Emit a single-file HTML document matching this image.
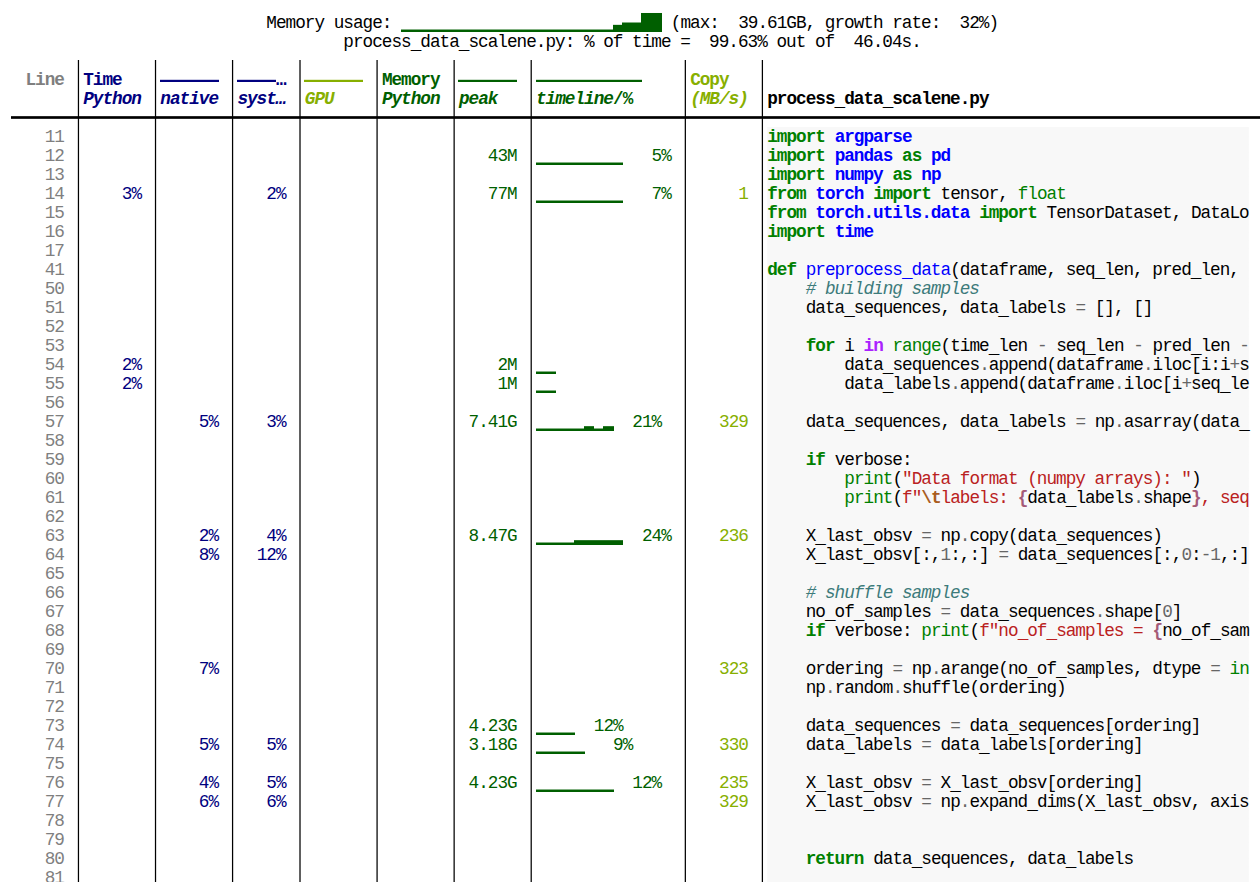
<!DOCTYPE html><html><head><meta charset="utf-8"><style>
html,body{margin:0;padding:0;background:#fff;width:1260px;height:882px;overflow:hidden;position:relative}
.t{position:absolute;white-space:pre;font-family:"Liberation Mono",monospace;font-size:17.7px;line-height:19px;letter-spacing:-0.99px}
.r{position:absolute}
.b{font-weight:bold}.i{font-style:italic}.u{position:relative;top:2.0px}
</style></head><body>
<div class="r" style="left:767px;top:127px;width:482px;height:755px;background:linear-gradient(to right,rgba(248,248,248,0.79) 0,rgba(248,248,248,0.79) 1px,#f8f8f8 1px,#f8f8f8 calc(100% - 1px),rgba(248,248,248,0.86) calc(100% - 1px),rgba(248,248,248,0.86) 100%)"></div>
<div class="r" style="left:401px;top:29px;width:213px;height:3px;background:linear-gradient(to bottom,rgba(0,95,0,0.49) 0,rgba(0,95,0,0.49) 1px,#005f00 1px,#005f00 calc(100% - 1px),rgba(0,95,0,1.00) calc(100% - 1px),rgba(0,95,0,1.00) 100%)"></div>
<div class="r" style="left:613px;top:24px;width:10px;height:8px;background:linear-gradient(to bottom,rgba(0,95,0,0.16) 0,rgba(0,95,0,0.16) 1px,#005f00 1px,#005f00 calc(100% - 1px),rgba(0,95,0,1.00) calc(100% - 1px),rgba(0,95,0,1.00) 100%)"></div>
<div class="r" style="left:622px;top:22px;width:20px;height:10px;background:linear-gradient(to bottom,rgba(0,95,0,0.50) 0,rgba(0,95,0,0.50) 1px,#005f00 1px,#005f00 calc(100% - 1px),rgba(0,95,0,1.00) calc(100% - 1px),rgba(0,95,0,1.00) 100%)"></div>
<div class="r" style="left:641px;top:12px;width:21px;height:20px;background:linear-gradient(to bottom,rgba(0,95,0,0.01) 0,rgba(0,95,0,0.01) 1px,#005f00 1px,#005f00 calc(100% - 1px),rgba(0,95,0,1.00) calc(100% - 1px),rgba(0,95,0,1.00) 100%)"></div>
<div class="r" style="left:160px;top:79px;width:59px;height:3px;background:linear-gradient(to bottom,rgba(0,0,128,0.20) 0,rgba(0,0,128,0.20) 1px,#000080 1px,#000080 calc(100% - 1px),rgba(0,0,128,1.00) calc(100% - 1px),rgba(0,0,128,1.00) 100%)"></div>
<div class="r" style="left:237px;top:79px;width:39px;height:3px;background:linear-gradient(to bottom,rgba(0,0,128,0.20) 0,rgba(0,0,128,0.20) 1px,#000080 1px,#000080 calc(100% - 1px),rgba(0,0,128,1.00) calc(100% - 1px),rgba(0,0,128,1.00) 100%)"></div>
<div class="r" style="left:304px;top:79px;width:59px;height:3px;background:linear-gradient(to bottom,rgba(135,175,0,0.20) 0,rgba(135,175,0,0.20) 1px,#87af00 1px,#87af00 calc(100% - 1px),rgba(135,175,0,1.00) calc(100% - 1px),rgba(135,175,0,1.00) 100%)"></div>
<div class="r" style="left:458px;top:79px;width:59px;height:3px;background:linear-gradient(to bottom,rgba(0,95,0,0.20) 0,rgba(0,95,0,0.20) 1px,#005f00 1px,#005f00 calc(100% - 1px),rgba(0,95,0,1.00) calc(100% - 1px),rgba(0,95,0,1.00) 100%)"></div>
<div class="r" style="left:536px;top:79px;width:106px;height:3px;background:linear-gradient(to bottom,rgba(0,95,0,0.20) 0,rgba(0,95,0,0.20) 1px,#005f00 1px,#005f00 calc(100% - 1px),rgba(0,95,0,1.00) calc(100% - 1px),rgba(0,95,0,1.00) 100%)"></div>
<div class="r" style="left:77px;top:60px;width:3px;height:822px;background:linear-gradient(to right,rgba(0,0,0,0.17) 0,rgba(0,0,0,0.17) 1px,#000 1px,#000 calc(100% - 1px),rgba(0,0,0,0.08) calc(100% - 1px),rgba(0,0,0,0.08) 100%)"></div>
<div class="r" style="left:154px;top:60px;width:3px;height:822px;background:linear-gradient(to right,rgba(0,0,0,0.11) 0,rgba(0,0,0,0.11) 1px,#000 1px,#000 calc(100% - 1px),rgba(0,0,0,0.14) calc(100% - 1px),rgba(0,0,0,0.14) 100%)"></div>
<div class="r" style="left:231px;top:60px;width:3px;height:822px;background:linear-gradient(to right,rgba(0,0,0,0.05) 0,rgba(0,0,0,0.05) 1px,#000 1px,#000 calc(100% - 1px),rgba(0,0,0,0.20) calc(100% - 1px),rgba(0,0,0,0.20) 100%)"></div>
<div class="r" style="left:299px;top:60px;width:2px;height:822px;background:linear-gradient(to right,rgba(0,0,0,0.62) 0,rgba(0,0,0,0.62) 1px,#000 1px,#000 calc(100% - 1px),rgba(0,0,0,0.63) calc(100% - 1px),rgba(0,0,0,0.63) 100%)"></div>
<div class="r" style="left:376px;top:60px;width:2px;height:822px;background:linear-gradient(to right,rgba(0,0,0,0.55) 0,rgba(0,0,0,0.55) 1px,#000 1px,#000 calc(100% - 1px),rgba(0,0,0,0.70) calc(100% - 1px),rgba(0,0,0,0.70) 100%)"></div>
<div class="r" style="left:453px;top:60px;width:2px;height:822px;background:linear-gradient(to right,rgba(0,0,0,0.49) 0,rgba(0,0,0,0.49) 1px,#000 1px,#000 calc(100% - 1px),rgba(0,0,0,0.76) calc(100% - 1px),rgba(0,0,0,0.76) 100%)"></div>
<div class="r" style="left:530px;top:60px;width:2px;height:822px;background:linear-gradient(to right,rgba(0,0,0,0.42) 0,rgba(0,0,0,0.42) 1px,#000 1px,#000 calc(100% - 1px),rgba(0,0,0,0.83) calc(100% - 1px),rgba(0,0,0,0.83) 100%)"></div>
<div class="r" style="left:684px;top:60px;width:2px;height:822px;background:linear-gradient(to right,rgba(0,0,0,0.29) 0,rgba(0,0,0,0.29) 1px,#000 1px,#000 calc(100% - 1px),rgba(0,0,0,0.96) calc(100% - 1px),rgba(0,0,0,0.96) 100%)"></div>
<div class="r" style="left:761px;top:60px;width:3px;height:822px;background:linear-gradient(to right,rgba(0,0,0,0.23) 0,rgba(0,0,0,0.23) 1px,#000 1px,#000 calc(100% - 1px),rgba(0,0,0,0.02) calc(100% - 1px),rgba(0,0,0,0.02) 100%)"></div>
<div class="r" style="left:11px;top:116px;width:1249px;height:3px;background:linear-gradient(to bottom,rgba(0,0,0,0.84) 0,rgba(0,0,0,0.84) 1px,#000 1px,#000 calc(100% - 1px),rgba(0,0,0,0.84) calc(100% - 1px),rgba(0,0,0,0.84) 100%)"></div>
<div class="r" style="left:536px;top:162px;width:87px;height:3px;background:linear-gradient(to bottom,rgba(0,95,0,0.49) 0,rgba(0,95,0,0.49) 1px,#005f00 1px,#005f00 calc(100% - 1px),rgba(0,95,0,1.00) calc(100% - 1px),rgba(0,95,0,1.00) 100%)"></div>
<div class="r" style="left:536px;top:200px;width:87px;height:3px;background:linear-gradient(to bottom,rgba(0,95,0,0.49) 0,rgba(0,95,0,0.49) 1px,#005f00 1px,#005f00 calc(100% - 1px),rgba(0,95,0,1.00) calc(100% - 1px),rgba(0,95,0,1.00) 100%)"></div>
<div class="r" style="left:536px;top:371px;width:20px;height:3px;background:linear-gradient(to bottom,rgba(0,95,0,0.49) 0,rgba(0,95,0,0.49) 1px,#005f00 1px,#005f00 calc(100% - 1px),rgba(0,95,0,1.00) calc(100% - 1px),rgba(0,95,0,1.00) 100%)"></div>
<div class="r" style="left:536px;top:390px;width:20px;height:3px;background:linear-gradient(to bottom,rgba(0,95,0,0.49) 0,rgba(0,95,0,0.49) 1px,#005f00 1px,#005f00 calc(100% - 1px),rgba(0,95,0,1.00) calc(100% - 1px),rgba(0,95,0,1.00) 100%)"></div>
<div class="r" style="left:536px;top:428px;width:49px;height:3px;background:linear-gradient(to bottom,rgba(0,95,0,0.49) 0,rgba(0,95,0,0.49) 1px,#005f00 1px,#005f00 calc(100% - 1px),rgba(0,95,0,1.00) calc(100% - 1px),rgba(0,95,0,1.00) 100%)"></div>
<div class="r" style="left:584px;top:426px;width:10px;height:5px;background:linear-gradient(to bottom,rgba(0,95,0,0.83) 0,rgba(0,95,0,0.83) 1px,#005f00 1px,#005f00 calc(100% - 1px),rgba(0,95,0,1.00) calc(100% - 1px),rgba(0,95,0,1.00) 100%)"></div>
<div class="r" style="left:593px;top:428px;width:11px;height:3px;background:linear-gradient(to bottom,rgba(0,95,0,0.49) 0,rgba(0,95,0,0.49) 1px,#005f00 1px,#005f00 calc(100% - 1px),rgba(0,95,0,1.00) calc(100% - 1px),rgba(0,95,0,1.00) 100%)"></div>
<div class="r" style="left:603px;top:426px;width:11px;height:5px;background:linear-gradient(to bottom,rgba(0,95,0,0.83) 0,rgba(0,95,0,0.83) 1px,#005f00 1px,#005f00 calc(100% - 1px),rgba(0,95,0,1.00) calc(100% - 1px),rgba(0,95,0,1.00) 100%)"></div>
<div class="r" style="left:536px;top:542px;width:39px;height:3px;background:linear-gradient(to bottom,rgba(0,95,0,0.49) 0,rgba(0,95,0,0.49) 1px,#005f00 1px,#005f00 calc(100% - 1px),rgba(0,95,0,1.00) calc(100% - 1px),rgba(0,95,0,1.00) 100%)"></div>
<div class="r" style="left:574px;top:540px;width:49px;height:5px;background:linear-gradient(to bottom,rgba(0,95,0,0.83) 0,rgba(0,95,0,0.83) 1px,#005f00 1px,#005f00 calc(100% - 1px),rgba(0,95,0,1.00) calc(100% - 1px),rgba(0,95,0,1.00) 100%)"></div>
<div class="r" style="left:536px;top:732px;width:39px;height:3px;background:linear-gradient(to bottom,rgba(0,95,0,0.49) 0,rgba(0,95,0,0.49) 1px,#005f00 1px,#005f00 calc(100% - 1px),rgba(0,95,0,1.00) calc(100% - 1px),rgba(0,95,0,1.00) 100%)"></div>
<div class="r" style="left:536px;top:751px;width:49px;height:3px;background:linear-gradient(to bottom,rgba(0,95,0,0.49) 0,rgba(0,95,0,0.49) 1px,#005f00 1px,#005f00 calc(100% - 1px),rgba(0,95,0,1.00) calc(100% - 1px),rgba(0,95,0,1.00) 100%)"></div>
<div class="r" style="left:536px;top:789px;width:78px;height:3px;background:linear-gradient(to bottom,rgba(0,95,0,0.49) 0,rgba(0,95,0,0.49) 1px,#005f00 1px,#005f00 calc(100% - 1px),rgba(0,95,0,1.00) calc(100% - 1px),rgba(0,95,0,1.00) 100%)"></div>
<div class="t" style="left:266.29px;top:14px;color:#000">Memory usage: </div>
<div class="t" style="left:661.24px;top:14px;color:#000"> (max:  39.61GB, growth rate:  32%)</div>
<div class="t" style="left:343.35px;top:33px;color:#000">process<span class="u">_</span>data<span class="u">_</span>scalene.py: % of time =  99.63% out of  46.04s.</div>
<div class="t b" style="left:25.47px;top:71px;color:#7f7f7f">Line</div>
<div class="t b" style="left:83.26px;top:71px;color:#000080">Time</div>
<div class="t b" style="left:275.92px;top:71px;color:#000080">…</div>
<div class="t b" style="left:381.89px;top:71px;color:#005f00">Memory</div>
<div class="t b" style="left:690.14px;top:71px;color:#87af00">Copy</div>
<div class="t b i" style="left:83.26px;top:90px;color:#000080">Python</div>
<div class="t b i" style="left:160.33px;top:90px;color:#000080">native</div>
<div class="t b i" style="left:237.39px;top:90px;color:#000080">syst…</div>
<div class="t b i" style="left:304.82px;top:90px;color:#87af00">GPU</div>
<div class="t b i" style="left:381.89px;top:90px;color:#005f00">Python</div>
<div class="t b i" style="left:458.95px;top:90px;color:#005f00">peak</div>
<div class="t b i" style="left:536.01px;top:90px;color:#005f00">timeline</div>
<div class="t b" style="left:613.08px;top:90px;color:#005f00">/%</div>
<div class="t b i" style="left:690.14px;top:90px;color:#87af00">(MB/s)</div>
<div class="t b" style="left:767.21px;top:90px;color:#000">process<span class="u">_</span>data<span class="u">_</span>scalene.py</div>
<div class="t" style="left:44.73px;top:128px;color:#7f7f7f">11</div>
<div class="t b" style="left:767.21px;top:128px;color:#008000">import</div>
<div class="t b" style="left:834.64px;top:128px;color:#0000ff">argparse</div>
<div class="t" style="left:44.73px;top:147px;color:#7f7f7f">12</div>
<div class="t" style="left:487.85px;top:147px;color:#005f00">43M</div>
<div class="t" style="left:622.71px;top:147px;color:#005f00">   5%</div>
<div class="t b" style="left:767.21px;top:147px;color:#008000">import</div>
<div class="t b" style="left:834.64px;top:147px;color:#0000ff">pandas</div>
<div class="t b" style="left:902.07px;top:147px;color:#008000">as</div>
<div class="t b" style="left:930.97px;top:147px;color:#0000ff">pd</div>
<div class="t" style="left:44.73px;top:166px;color:#7f7f7f">13</div>
<div class="t b" style="left:767.21px;top:166px;color:#008000">import</div>
<div class="t b" style="left:834.64px;top:166px;color:#0000ff">numpy</div>
<div class="t b" style="left:892.44px;top:166px;color:#008000">as</div>
<div class="t b" style="left:921.33px;top:166px;color:#0000ff">np</div>
<div class="t" style="left:44.73px;top:185px;color:#7f7f7f">14</div>
<div class="t" style="left:121.8px;top:185px;color:#000080">3%</div>
<div class="t" style="left:266.29px;top:185px;color:#000080">2%</div>
<div class="t" style="left:487.85px;top:185px;color:#005f00">77M</div>
<div class="t" style="left:738.31px;top:185px;color:#87af00">1</div>
<div class="t" style="left:622.71px;top:185px;color:#005f00">   7%</div>
<div class="t b" style="left:767.21px;top:185px;color:#008000">from</div>
<div class="t b" style="left:815.37px;top:185px;color:#0000ff">torch</div>
<div class="t b" style="left:873.17px;top:185px;color:#008000">import</div>
<div class="t" style="left:940.6px;top:185px;color:#000000">tensor, </div>
<div class="t" style="left:1017.66px;top:185px;color:#008000">float</div>
<div class="t" style="left:44.73px;top:204px;color:#7f7f7f">15</div>
<div class="t b" style="left:767.21px;top:204px;color:#008000">from</div>
<div class="t b" style="left:815.37px;top:204px;color:#0000ff">torch.utils.data</div>
<div class="t b" style="left:979.13px;top:204px;color:#008000">import</div>
<div class="t" style="left:1046.56px;top:204px;color:#000000">TensorDataset, DataLo</div>
<div class="t" style="left:44.73px;top:223px;color:#7f7f7f">16</div>
<div class="t b" style="left:767.21px;top:223px;color:#008000">import</div>
<div class="t b" style="left:834.64px;top:223px;color:#0000ff">time</div>
<div class="t" style="left:44.73px;top:242px;color:#7f7f7f">17</div>
<div class="t" style="left:44.73px;top:261px;color:#7f7f7f">41</div>
<div class="t b" style="left:767.21px;top:261px;color:#008000">def</div>
<div class="t" style="left:805.74px;top:261px;color:#0000ff">preprocess<span class="u">_</span>data</div>
<div class="t" style="left:950.23px;top:261px;color:#000000">(dataframe, seq<span class="u">_</span>len, pred<span class="u">_</span>len, </div>
<div class="t" style="left:44.73px;top:280px;color:#7f7f7f">50</div>
<div class="t i" style="left:805.74px;top:280px;color:#3d7b7b"># building samples</div>
<div class="t" style="left:44.73px;top:299px;color:#7f7f7f">51</div>
<div class="t" style="left:805.74px;top:299px;color:#000000">data<span class="u">_</span>sequences, data<span class="u">_</span>labels </div>
<div class="t" style="left:1075.46px;top:299px;color:#666666">=</div>
<div class="t" style="left:1094.73px;top:299px;color:#000000">[], []</div>
<div class="t" style="left:44.73px;top:318px;color:#7f7f7f">52</div>
<div class="t" style="left:44.73px;top:337px;color:#7f7f7f">53</div>
<div class="t b" style="left:805.74px;top:337px;color:#008000">for</div>
<div class="t" style="left:844.27px;top:337px;color:#000000">i </div>
<div class="t b" style="left:863.54px;top:337px;color:#aa22ff">in</div>
<div class="t" style="left:892.44px;top:337px;color:#008000">range</div>
<div class="t" style="left:940.6px;top:337px;color:#000000">(time<span class="u">_</span>len </div>
<div class="t" style="left:1036.93px;top:337px;color:#666666">-</div>
<div class="t" style="left:1056.2px;top:337px;color:#000000">seq<span class="u">_</span>len </div>
<div class="t" style="left:1133.26px;top:337px;color:#666666">-</div>
<div class="t" style="left:1152.53px;top:337px;color:#000000">pred<span class="u">_</span>len </div>
<div class="t" style="left:1239.22px;top:337px;color:#666666">-</div>
<div class="t" style="left:44.73px;top:356px;color:#7f7f7f">54</div>
<div class="t" style="left:121.8px;top:356px;color:#000080">2%</div>
<div class="t" style="left:497.48px;top:356px;color:#005f00">2M</div>
<div class="t" style="left:844.27px;top:356px;color:#000000">data<span class="u">_</span>sequences</div>
<div class="t" style="left:979.13px;top:356px;color:#666666">.</div>
<div class="t" style="left:988.77px;top:356px;color:#000000">append(dataframe</div>
<div class="t" style="left:1142.89px;top:356px;color:#666666">.</div>
<div class="t" style="left:1152.53px;top:356px;color:#000000">iloc[i:i</div>
<div class="t" style="left:1229.59px;top:356px;color:#666666">+</div>
<div class="t" style="left:1239.22px;top:356px;color:#000000">s</div>
<div class="t" style="left:44.73px;top:375px;color:#7f7f7f">55</div>
<div class="t" style="left:121.8px;top:375px;color:#000080">2%</div>
<div class="t" style="left:497.48px;top:375px;color:#005f00">1M</div>
<div class="t" style="left:844.27px;top:375px;color:#000000">data<span class="u">_</span>labels</div>
<div class="t" style="left:950.23px;top:375px;color:#666666">.</div>
<div class="t" style="left:959.87px;top:375px;color:#000000">append(dataframe</div>
<div class="t" style="left:1113.99px;top:375px;color:#666666">.</div>
<div class="t" style="left:1123.63px;top:375px;color:#000000">iloc[i</div>
<div class="t" style="left:1181.43px;top:375px;color:#666666">+</div>
<div class="t" style="left:1191.06px;top:375px;color:#000000">seq<span class="u">_</span>le</div>
<div class="t" style="left:44.73px;top:394px;color:#7f7f7f">56</div>
<div class="t" style="left:44.73px;top:413px;color:#7f7f7f">57</div>
<div class="t" style="left:198.86px;top:413px;color:#000080">5%</div>
<div class="t" style="left:266.29px;top:413px;color:#000080">3%</div>
<div class="t" style="left:468.58px;top:413px;color:#005f00">7.41G</div>
<div class="t" style="left:719.04px;top:413px;color:#87af00">329</div>
<div class="t" style="left:613.08px;top:413px;color:#005f00">  21%</div>
<div class="t" style="left:805.74px;top:413px;color:#000000">data<span class="u">_</span>sequences, data<span class="u">_</span>labels </div>
<div class="t" style="left:1075.46px;top:413px;color:#666666">=</div>
<div class="t" style="left:1094.73px;top:413px;color:#000000">np</div>
<div class="t" style="left:1113.99px;top:413px;color:#666666">.</div>
<div class="t" style="left:1123.63px;top:413px;color:#000000">asarray(data<span class="u">_</span></div>
<div class="t" style="left:44.73px;top:432px;color:#7f7f7f">58</div>
<div class="t" style="left:44.73px;top:451px;color:#7f7f7f">59</div>
<div class="t b" style="left:805.74px;top:451px;color:#008000">if</div>
<div class="t" style="left:834.64px;top:451px;color:#000000">verbose:</div>
<div class="t" style="left:44.73px;top:470px;color:#7f7f7f">60</div>
<div class="t" style="left:844.27px;top:470px;color:#008000">print</div>
<div class="t" style="left:892.44px;top:470px;color:#000000">(</div>
<div class="t" style="left:902.07px;top:470px;color:#ba2121">&quot;Data format (numpy arrays): &quot;</div>
<div class="t" style="left:1191.06px;top:470px;color:#000000">)</div>
<div class="t" style="left:44.73px;top:489px;color:#7f7f7f">61</div>
<div class="t" style="left:844.27px;top:489px;color:#008000">print</div>
<div class="t" style="left:892.44px;top:489px;color:#000000">(</div>
<div class="t" style="left:902.07px;top:489px;color:#ba2121">f&quot;</div>
<div class="t b" style="left:921.33px;top:489px;color:#aa5d1f">\t</div>
<div class="t" style="left:940.6px;top:489px;color:#ba2121">labels: </div>
<div class="t b" style="left:1017.66px;top:489px;color:#a45a77">{</div>
<div class="t" style="left:1027.3px;top:489px;color:#000000">data<span class="u">_</span>labels</div>
<div class="t" style="left:1133.26px;top:489px;color:#666666">.</div>
<div class="t" style="left:1142.89px;top:489px;color:#000000">shape</div>
<div class="t b" style="left:1191.06px;top:489px;color:#a45a77">}</div>
<div class="t" style="left:1200.69px;top:489px;color:#ba2121">, seq</div>
<div class="t" style="left:44.73px;top:508px;color:#7f7f7f">62</div>
<div class="t" style="left:44.73px;top:527px;color:#7f7f7f">63</div>
<div class="t" style="left:198.86px;top:527px;color:#000080">2%</div>
<div class="t" style="left:266.29px;top:527px;color:#000080">4%</div>
<div class="t" style="left:468.58px;top:527px;color:#005f00">8.47G</div>
<div class="t" style="left:719.04px;top:527px;color:#87af00">236</div>
<div class="t" style="left:622.71px;top:527px;color:#005f00">  24%</div>
<div class="t" style="left:805.74px;top:527px;color:#000000">X<span class="u">_</span>last<span class="u">_</span>obsv </div>
<div class="t" style="left:921.33px;top:527px;color:#666666">=</div>
<div class="t" style="left:940.6px;top:527px;color:#000000">np</div>
<div class="t" style="left:959.87px;top:527px;color:#666666">.</div>
<div class="t" style="left:969.5px;top:527px;color:#000000">copy(data<span class="u">_</span>sequences)</div>
<div class="t" style="left:44.73px;top:546px;color:#7f7f7f">64</div>
<div class="t" style="left:198.86px;top:546px;color:#000080">8%</div>
<div class="t" style="left:256.66px;top:546px;color:#000080">12%</div>
<div class="t" style="left:805.74px;top:546px;color:#000000">X<span class="u">_</span>last<span class="u">_</span>obsv[:,</div>
<div class="t" style="left:940.6px;top:546px;color:#666666">1</div>
<div class="t" style="left:950.23px;top:546px;color:#000000">:,:] </div>
<div class="t" style="left:998.4px;top:546px;color:#666666">=</div>
<div class="t" style="left:1017.66px;top:546px;color:#000000">data<span class="u">_</span>sequences[:,</div>
<div class="t" style="left:1181.43px;top:546px;color:#666666">0</div>
<div class="t" style="left:1191.06px;top:546px;color:#000000">:</div>
<div class="t" style="left:1200.69px;top:546px;color:#666666">-1</div>
<div class="t" style="left:1219.96px;top:546px;color:#000000">,:]</div>
<div class="t" style="left:44.73px;top:565px;color:#7f7f7f">65</div>
<div class="t" style="left:44.73px;top:584px;color:#7f7f7f">66</div>
<div class="t i" style="left:805.74px;top:584px;color:#3d7b7b"># shuffle samples</div>
<div class="t" style="left:44.73px;top:603px;color:#7f7f7f">67</div>
<div class="t" style="left:805.74px;top:603px;color:#000000">no<span class="u">_</span>of<span class="u">_</span>samples </div>
<div class="t" style="left:940.6px;top:603px;color:#666666">=</div>
<div class="t" style="left:959.87px;top:603px;color:#000000">data<span class="u">_</span>sequences</div>
<div class="t" style="left:1094.73px;top:603px;color:#666666">.</div>
<div class="t" style="left:1104.36px;top:603px;color:#000000">shape[</div>
<div class="t" style="left:1162.16px;top:603px;color:#666666">0</div>
<div class="t" style="left:1171.79px;top:603px;color:#000000">]</div>
<div class="t" style="left:44.73px;top:622px;color:#7f7f7f">68</div>
<div class="t b" style="left:805.74px;top:622px;color:#008000">if</div>
<div class="t" style="left:834.64px;top:622px;color:#000000">verbose: </div>
<div class="t" style="left:921.33px;top:622px;color:#008000">print</div>
<div class="t" style="left:969.5px;top:622px;color:#000000">(</div>
<div class="t" style="left:979.13px;top:622px;color:#ba2121">f&quot;no<span class="u">_</span>of<span class="u">_</span>samples = </div>
<div class="t b" style="left:1152.53px;top:622px;color:#a45a77">{</div>
<div class="t" style="left:1162.16px;top:622px;color:#000000">no<span class="u">_</span>of<span class="u">_</span>sam</div>
<div class="t" style="left:44.73px;top:641px;color:#7f7f7f">69</div>
<div class="t" style="left:44.73px;top:660px;color:#7f7f7f">70</div>
<div class="t" style="left:198.86px;top:660px;color:#000080">7%</div>
<div class="t" style="left:719.04px;top:660px;color:#87af00">323</div>
<div class="t" style="left:805.74px;top:660px;color:#000000">ordering </div>
<div class="t" style="left:892.44px;top:660px;color:#666666">=</div>
<div class="t" style="left:911.7px;top:660px;color:#000000">np</div>
<div class="t" style="left:930.97px;top:660px;color:#666666">.</div>
<div class="t" style="left:940.6px;top:660px;color:#000000">arange(no<span class="u">_</span>of<span class="u">_</span>samples, dtype </div>
<div class="t" style="left:1210.33px;top:660px;color:#666666">=</div>
<div class="t" style="left:1229.59px;top:660px;color:#008000">in</div>
<div class="t" style="left:44.73px;top:679px;color:#7f7f7f">71</div>
<div class="t" style="left:805.74px;top:679px;color:#000000">np</div>
<div class="t" style="left:825px;top:679px;color:#666666">.</div>
<div class="t" style="left:834.64px;top:679px;color:#000000">random</div>
<div class="t" style="left:892.44px;top:679px;color:#666666">.</div>
<div class="t" style="left:902.07px;top:679px;color:#000000">shuffle(ordering)</div>
<div class="t" style="left:44.73px;top:698px;color:#7f7f7f">72</div>
<div class="t" style="left:44.73px;top:717px;color:#7f7f7f">73</div>
<div class="t" style="left:468.58px;top:717px;color:#005f00">4.23G</div>
<div class="t" style="left:574.55px;top:717px;color:#005f00">  12%</div>
<div class="t" style="left:805.74px;top:717px;color:#000000">data<span class="u">_</span>sequences </div>
<div class="t" style="left:950.23px;top:717px;color:#666666">=</div>
<div class="t" style="left:969.5px;top:717px;color:#000000">data<span class="u">_</span>sequences[ordering]</div>
<div class="t" style="left:44.73px;top:736px;color:#7f7f7f">74</div>
<div class="t" style="left:198.86px;top:736px;color:#000080">5%</div>
<div class="t" style="left:266.29px;top:736px;color:#000080">5%</div>
<div class="t" style="left:468.58px;top:736px;color:#005f00">3.18G</div>
<div class="t" style="left:719.04px;top:736px;color:#87af00">330</div>
<div class="t" style="left:584.18px;top:736px;color:#005f00">   9%</div>
<div class="t" style="left:805.74px;top:736px;color:#000000">data<span class="u">_</span>labels </div>
<div class="t" style="left:921.33px;top:736px;color:#666666">=</div>
<div class="t" style="left:940.6px;top:736px;color:#000000">data<span class="u">_</span>labels[ordering]</div>
<div class="t" style="left:44.73px;top:755px;color:#7f7f7f">75</div>
<div class="t" style="left:44.73px;top:774px;color:#7f7f7f">76</div>
<div class="t" style="left:198.86px;top:774px;color:#000080">4%</div>
<div class="t" style="left:266.29px;top:774px;color:#000080">5%</div>
<div class="t" style="left:468.58px;top:774px;color:#005f00">4.23G</div>
<div class="t" style="left:719.04px;top:774px;color:#87af00">235</div>
<div class="t" style="left:613.08px;top:774px;color:#005f00">  12%</div>
<div class="t" style="left:805.74px;top:774px;color:#000000">X<span class="u">_</span>last<span class="u">_</span>obsv </div>
<div class="t" style="left:921.33px;top:774px;color:#666666">=</div>
<div class="t" style="left:940.6px;top:774px;color:#000000">X<span class="u">_</span>last<span class="u">_</span>obsv[ordering]</div>
<div class="t" style="left:44.73px;top:793px;color:#7f7f7f">77</div>
<div class="t" style="left:198.86px;top:793px;color:#000080">6%</div>
<div class="t" style="left:266.29px;top:793px;color:#000080">6%</div>
<div class="t" style="left:719.04px;top:793px;color:#87af00">329</div>
<div class="t" style="left:805.74px;top:793px;color:#000000">X<span class="u">_</span>last<span class="u">_</span>obsv </div>
<div class="t" style="left:921.33px;top:793px;color:#666666">=</div>
<div class="t" style="left:940.6px;top:793px;color:#000000">np</div>
<div class="t" style="left:959.87px;top:793px;color:#666666">.</div>
<div class="t" style="left:969.5px;top:793px;color:#000000">expand<span class="u">_</span>dims(X<span class="u">_</span>last<span class="u">_</span>obsv, axis</div>
<div class="t" style="left:44.73px;top:812px;color:#7f7f7f">78</div>
<div class="t" style="left:44.73px;top:831px;color:#7f7f7f">79</div>
<div class="t" style="left:44.73px;top:850px;color:#7f7f7f">80</div>
<div class="t b" style="left:805.74px;top:850px;color:#008000">return</div>
<div class="t" style="left:873.17px;top:850px;color:#000000">data<span class="u">_</span>sequences, data<span class="u">_</span>labels</div>
<div class="t" style="left:44.73px;top:869px;color:#7f7f7f">81</div>
</body></html>
